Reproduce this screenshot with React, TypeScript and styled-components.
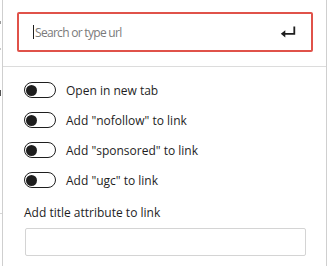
import React from "react";
import styled, { createGlobalStyle } from "styled-components";

const Global = createGlobalStyle`
  html, body { margin: 0; padding: 0; background: #fff; }
  body { font-family: "Open Sans", "Noto Sans", sans-serif; color: #1e1e1e; }
  * { box-sizing: border-box; }
`;

const Page = styled.div`
  display: flex;
  width: 328px;
  height: 266px;
  overflow: hidden;
  background: #fff;
`;

const EdgeStrip = styled.div`
  width: 2px;
  flex: none;
  background:
    linear-gradient(#9a9a9a, #9a9a9a) 0 21px / 1px 3px no-repeat,
    linear-gradient(#c8c8c8, #c8c8c8) 0 48px / 1px 2px no-repeat,
    linear-gradient(#555, #555) 0 90px / 1px 6px no-repeat,
    linear-gradient(#d6d6d6, #d6d6d6) 0 213px / 2px 1px no-repeat;
`;

const Popover = styled.div`
  width: 325px;
  flex: none;
  border-left: 1px solid #cfcfcf;
  border-right: 1px solid #cfcfcf;
  display: flex;
  flex-direction: column;
`;

const SearchSection = styled.div`
  padding: 12px 13px 14px 14px;
  border-bottom: 1px solid #dcdcdc;
`;

const SearchBox = styled.div`
  height: 40px;
  border: 2px solid #e0524a;
  border-radius: 2px;
  display: flex;
  align-items: center;
  padding: 0 14px 0 14px;
`;

const Caret = styled.span`
  width: 1px;
  height: 14px;
  background: #1e1e1e;
  flex: none;
`;

const Placeholder = styled.span`
  flex: 1;
  font-size: 12px;
  letter-spacing: -0.7px;
  color: #7a7a7a;
  margin-left: 1px;
`;

const SettingsSection = styled.div`
  padding: 15px 14px 0 21px;
  display: flex;
  flex-direction: column;
  gap: 14px;
`;

const ToggleRow = styled.label`
  display: flex;
  align-items: center;
  gap: 10px;
  height: 16px;
  font-size: 12px;
  color: #1e1e1e;
`;

const Track = styled.span<{ $on?: boolean }>`
  width: 32px;
  height: 16px;
  border: 1px solid #1e1e1e;
  border-radius: 8px;
  display: flex;
  align-items: center;
  justify-content: ${(p) => (p.$on ? "flex-end" : "flex-start")};
  padding: 0 2px 0 1px;
  flex: none;
`;

const Thumb = styled.span`
  width: 11px;
  height: 11px;
  border-radius: 50%;
  background: #1e1e1e;
`;

const TitleField = styled.div`
  display: flex;
  flex-direction: column;
  gap: 6px;
  margin-top: 2px;
`;

const FieldLabel = styled.div`
  font-size: 12px;
  line-height: 18px;
  color: #1e1e1e;
`;

const TextInput = styled.div`
  margin-left: 1px;
  width: 281px;
  height: 28px;
  border: 1px solid #d4d4d4;
  border-radius: 2px;
`;

const ReturnIcon = () => (
  <svg width="18" height="18" viewBox="0 0 20 20" aria-hidden="true">
    <path d="M16 4h2v9H7v3l-5-4 5-4v3h9V4z" fill="#1e1e1e" />
  </svg>
);

const toggles = [
  "Open in new tab",
  'Add "nofollow" to link',
  'Add "sponsored" to link',
  'Add "ugc" to link',
];

export default function App() {
  return (
    <>
      <Global />
      <Page>
        <EdgeStrip />
        <Popover>
          <SearchSection>
            <SearchBox>
              <Caret />
              <Placeholder>Search or type url</Placeholder>
              <ReturnIcon />
            </SearchBox>
          </SearchSection>
          <SettingsSection>
            {toggles.map((t) => (
              <ToggleRow key={t}>
                <Track>
                  <Thumb />
                </Track>
                {t}
              </ToggleRow>
            ))}
            <TitleField>
              <FieldLabel>Add title attribute to link</FieldLabel>
              <TextInput />
            </TitleField>
          </SettingsSection>
        </Popover>
      </Page>
    </>
  );
}
